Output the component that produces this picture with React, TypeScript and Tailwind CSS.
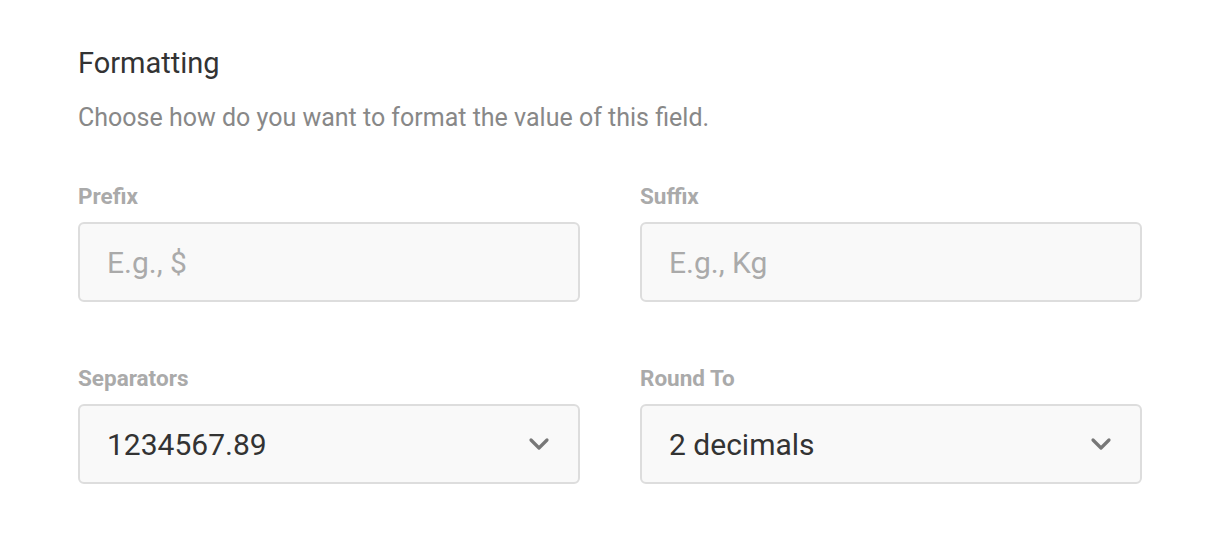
import React from "react";

function Chevron() {
  return (
    <svg width="22" height="14" viewBox="0 0 22 14" fill="none" className="shrink-0">
      <path d="M3 3l8 8 8-8" stroke="#777" strokeWidth="3.2" strokeLinecap="round" strokeLinejoin="round" />
    </svg>
  );
}

function Field({ label, placeholder }: { label: string; placeholder: string }) {
  return (
    <div className="flex flex-col">
      <label className="mb-[12px] text-[22.5px] font-bold leading-[28px] text-[#aaaaaa]">{label}</label>
      <input
        type="text"
        placeholder={placeholder}
        className="h-[80px] w-full rounded-[6px] border-2 border-[#dddddd] bg-[#f9f9f9] px-[27px] text-[30px] text-[#333333] placeholder:text-[#aaaaaa] focus:outline-none"
      />
    </div>
  );
}

function SelectField({ label, value }: { label: string; value: string }) {
  return (
    <div className="flex flex-col">
      <label className="mb-[12px] text-[22.5px] font-bold leading-[28px] text-[#aaaaaa]">{label}</label>
      <div className="flex h-[80px] w-full items-center justify-between rounded-[6px] border-2 border-[#dddddd] bg-[#f9f9f9] pl-[27px] pr-[28px]">
        <span className="text-[30px] text-[#333333]">{value}</span>
        <Chevron />
      </div>
    </div>
  );
}

export default function App() {
  return (
    <div className="h-[536px] w-[1220px] bg-white pl-[78px] pt-[45px] font-['Roboto',sans-serif]">
      <div className="w-[1064px]">
        <h2 className="text-[29px] font-normal leading-[36px] text-[#333333]">Formatting</h2>
        <p className="mt-[21px] text-[25px] leading-[32px] text-[#888888]">
          Choose how do you want to format the value of this field.
        </p>
        <div className="mt-[48px] grid grid-cols-2 gap-x-[60px] gap-y-[62px]">
          <Field label="Prefix" placeholder="E.g., $" />
          <Field label="Suffix" placeholder="E.g., Kg" />
          <SelectField label="Separators" value="1234567.89" />
          <SelectField label="Round To" value="2 decimals" />
        </div>
      </div>
    </div>
  );
}
